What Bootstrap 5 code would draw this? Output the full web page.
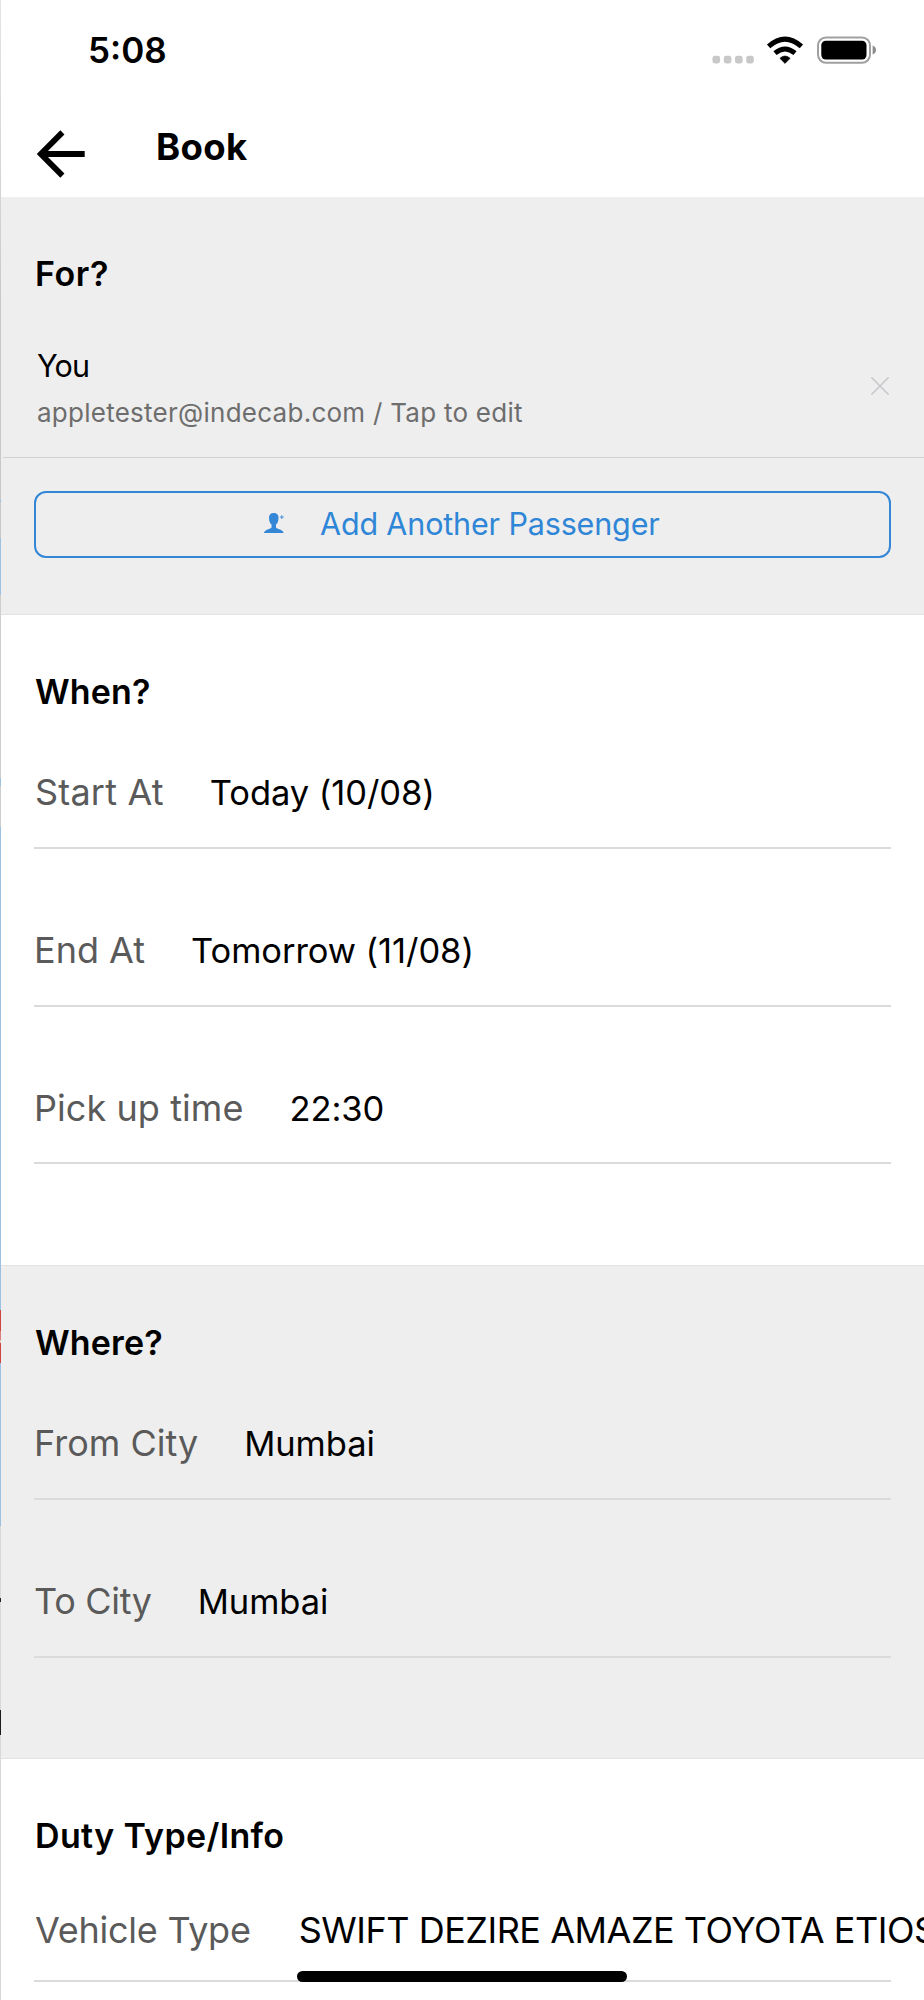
<!DOCTYPE html>
<html lang="en">
<head>
<meta charset="utf-8">
<meta name="viewport" content="width=device-width, initial-scale=1">
<title>Book</title>
<link href="https://cdn.jsdelivr.net/npm/bootstrap@5.3.0/dist/css/bootstrap.min.css" rel="stylesheet">
<style>
  body { font-family: Inter, "Liberation Sans", sans-serif; color: #000; background: #fff; }
  .phone { width: 924px; height: 2000px; }
  .edge { top: 0; left: 0; width: 1px; height: 2000px;
    background: linear-gradient(#e4e4e4 0, #d0d0cf 240px, #c9c8c4 300px 500px, #9bbfe0 500px 502px, #c9c8c4 502px 538px, #9bc0e2 538px 595px, #cfcecb 595px 778px, #9bc0e2 778px 786px, #cfcecb 786px 827px, #9bc0e2 827px 1310px, #cf4540 1310px 1331px, #d97f7b 1331px 1340px, #e5c9c8 1340px 1343px, #cf4540 1343px 1363px, #9bc0e2 1363px 1526px, #d8d8d8 1526px 1598px, #222 1598px 1602px, #d8d8d8 1602px 1710px, #1c1c1c 1710px 1735px, #d8d8d8 1735px); }
  .statusbar { height: 100px; padding: 0 48px 0 88px; }
  .clock { font-size: 35px; font-weight: 600; line-height: 101px; }
  .topbar { height: 97px; padding-left: 37px; }
  .topbar svg { margin-top: 30px; }
  .topbar h1 { margin: 22px 0 0 71px; font-size: 36.5px; font-weight: 700; line-height: 50px; letter-spacing: .4px; }
  .block { padding: 52px 33px 0 34px; border-bottom: 1px solid #e2e2e2; }
  .shade { background: #eee; }
  .block h2 { margin: 0 0 0 1px; font-size: 34px; font-weight: 600; line-height: 50px; letter-spacing: .15px; }
  .b-for { height: 418px; }
  .b-for h2 { letter-spacing: .6px; }
  .b-when { height: 651px; }
  .b-where { height: 493px; }
  .b-duty { height: 241px; border: 0; }
  .b-duty h2 { letter-spacing: .35px; }
  .passenger { margin: 0 -33px 33px -31px; padding: 44px 35px 21px 34px; border-bottom: 1px solid #d2d2d2; height: 159px; }
  .who { font-size: 30.5px; line-height: 46px; letter-spacing: -.8px; }
  .mail { font-size: 26px; line-height: 46px; letter-spacing: .26px; color: #6d6d6d; padding-top: 1px; }
  .passenger svg { margin-top: 34px; }
  .add { height: 67px; border: 2px solid #3487d6; border-radius: 12px; color: #2f86d6; font-size: 30.5px; letter-spacing: -.15px; line-height: 61px; padding: 0 0 2px 228px; }
  .add svg { margin: -2px 36px 0 0; }
  .field { height: 131.8px; padding-top: 50px; border-bottom: 2px solid #dbdbde; margin-bottom: 26px; line-height: 50px; white-space: nowrap; gap: 46px; }
  .f-tight { height: 121px; padding-top: 44px; gap: 48px; }
  .cap { font-size: 36px; color: #5a5a5a; }
  .c-start { padding-left: 1px; letter-spacing: .2px; }
  .c-pick { letter-spacing: .07px; }
  .c-to { letter-spacing: -.3px; }
  .c-vehicle { padding-left: 1px; letter-spacing: -.25px; }
  .val { font-size: 34.5px; letter-spacing: -.06px; }
  .val-lg { font-size: 36px; letter-spacing: -.48px; }
  .homebar { left: 297px; top: 1971px; width: 330px; height: 11px; border-radius: 6px; background: #000; }
</style>
<script src="https://cdn.jsdelivr.net/npm/bootstrap@5.3.0/dist/js/bootstrap.bundle.min.js"></script>
</head>
<body>
<div class="phone position-relative overflow-hidden">
  <div class="statusbar d-flex justify-content-between align-items-center">
    <div class="clock">5:08</div>
    <svg width="166" height="30" viewBox="0 0 166 30">
      <g fill="#c8c8c8"><rect x="2.5" y="20.8" width="7.6" height="7.6" rx="2.4"/><rect x="13.8" y="20.8" width="7.6" height="7.6" rx="2.4"/><rect x="25" y="20.8" width="7.6" height="7.6" rx="2.4"/><rect x="36.2" y="20.8" width="7.6" height="7.6" rx="2.4"/></g>
      <path d="M75 28.4 69.9 23.3Q75 18.7 80.1 23.3Z" stroke="#000" stroke-width=".6" stroke-linejoin="round"/>
      <g fill="none" stroke="#000" stroke-width="5"><path d="M65 18.2Q75 9.8 85 18.2"/><path d="M58.6 11.4Q75-3.2 91.4 11.4"/></g>
      <rect x="108" y="2.4" width="52" height="25.4" rx="8" fill="none" stroke="#a0a0a0" stroke-width="2"/>
      <rect x="111.3" y="5.8" width="45.2" height="18.8" rx="4.5"/>
      <path d="M162.6 10.5Q166 11.8 166 15T162.6 19.6Z" fill="#8d8d8d"/>
    </svg>
  </div>
  <header class="topbar d-flex align-items-start">
    <svg width="48" height="48" viewBox="0 0 48 48" fill="none" stroke="#000" stroke-width="5.8"><path d="M47.7 24H5M25.4 2.4 3.9 24 25.4 45.6"/></svg>
    <h1>Book</h1>
  </header>

  <section class="block shade b-for">
    <h2>For?</h2>
    <div class="passenger d-flex justify-content-between align-items-start">
      <div><div class="who">You</div><div class="mail">appletester@indecab.com / Tap to edit</div></div>
      <svg width="18" height="18" viewBox="0 0 18 18" stroke="#c8c8cc" stroke-width="1.6" stroke-linecap="round"><path d="M.8.8 17.2 17.2M17.2.8.8 17.2"/></svg>
    </div>
    <button class="add btn w-100 d-flex align-items-center" type="button">
      <svg width="20" height="20" viewBox="0 0 20 20" fill="#3487d6"><path d="M9.7 0C12.6 0 14.7 1.7 14.5 5 14.4 8.1 13.6 10.4 12 11.6V14.4C12.6 16 19.3 16.3 19.6 20H0C.4 16.3 6.9 16 7.5 14.4V11.6C5.9 10.4 5.1 8.1 5 5 4.9 1.7 6.8 0 9.7 0Z"/><path d="M17.8 2.2V6M15.9 4.1h3.9" stroke="#3487d6" stroke-width=".9"/></svg>
      <span>Add Another Passenger</span>
    </button>
  </section>

  <section class="block b-when">
    <h2>When?</h2>
    <div class="field d-flex align-items-baseline"><span class="cap c-start">Start At</span><span class="val">Today (10/08)</span></div>
    <div class="field d-flex align-items-baseline"><span class="cap">End At</span><span class="val">Tomorrow (11/08)</span></div>
    <div class="field d-flex align-items-baseline"><span class="cap c-pick">Pick up time</span><span class="val">22:30</span></div>
  </section>

  <section class="block shade b-where">
    <h2>Where?</h2>
    <div class="field d-flex align-items-baseline"><span class="cap">From City</span><span class="val">Mumbai</span></div>
    <div class="field d-flex align-items-baseline"><span class="cap c-to">To City</span><span class="val">Mumbai</span></div>
  </section>

  <section class="block b-duty">
    <h2>Duty Type/Info</h2>
    <div class="field f-tight d-flex align-items-baseline"><span class="cap c-vehicle">Vehicle Type</span><span class="val-lg">SWIFT DEZIRE AMAZE TOYOTA ETIOS</span></div>
  </section>

  <div class="homebar position-absolute"></div>
  <div class="edge position-absolute"></div>
</div>
</body>
</html>
